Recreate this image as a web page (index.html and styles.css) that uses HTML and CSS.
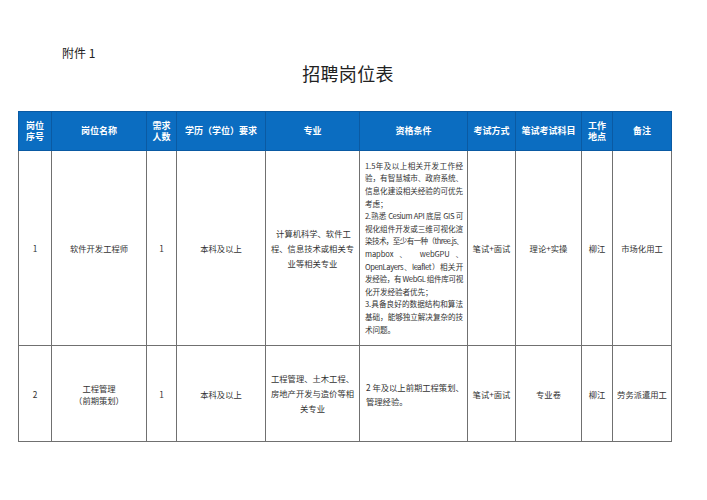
FILE: index.html
```html
<!DOCTYPE html>
<html lang="zh">
<head>
<meta charset="utf-8">
<link rel="stylesheet" href="styles.css">
</head>
<body>
<div class="page">
  <div class="annex">附件 1</div>
  <h1 class="title">招聘岗位表</h1>
  <table class="jobs">
    <colgroup>
      <col class="c1"><col class="c2"><col class="c3"><col class="c4"><col class="c5">
      <col class="c6"><col class="c7"><col class="c8"><col class="c9"><col class="c10">
    </colgroup>
    <thead>
      <tr>
        <th>岗位<br>序号</th>
        <th>岗位名称</th>
        <th>需求<br>人数</th>
        <th>学历（学位）要求</th>
        <th>专业</th>
        <th>资格条件</th>
        <th>考试方式</th>
        <th>笔试考试科目</th>
        <th>工作<br>地点</th>
        <th>备注</th>
      </tr>
    </thead>
    <tbody>
      <tr class="r1">
        <td>1</td>
        <td>软件开发工程师</td>
        <td>1</td>
        <td>本科及以上</td>
        <td class="major">&nbsp;计算机科学、软件工<br>程、信息技术或相关专<br>业等相关专业</td>
        <td class="qual">
          <span class="ln j">1.5年及以上相关开发工作经</span>
          <span class="ln j">验，有智慧城市、政府系统、</span>
          <span class="ln j">信息化建设相关经验的可优先</span>
          <span class="ln">考虑；</span>
          <span class="ln j t">2.熟悉 Cesium API 底层 GIS 可</span>
          <span class="ln j">视化组件开发或三维可视化渲</span>
          <span class="ln j tt">染技术，至少有一种（three.js、</span>
          <span class="ln j">mapbox、 webGPU、</span>
          <span class="ln j t">OpenLayers、leaflet）相关开</span>
          <span class="ln j t">发经验，有 WebGL 组件库可视</span>
          <span class="ln">化开发经验者优先；</span>
          <span class="ln j">3.具备良好的数据结构和算法</span>
          <span class="ln j">基础，能够独立解决复杂的技</span>
          <span class="ln">术问题。</span>
        </td>
        <td>笔试+面试</td>
        <td>理论+实操</td>
        <td>柳江</td>
        <td>市场化用工</td>
      </tr>
      <tr class="r2">
        <td>2</td>
        <td class="name2">工程管理<br>（前期策划）</td>
        <td>1</td>
        <td>本科及以上</td>
        <td class="major">工程管理、土木工程、<br>房地产开发与造价等相<br>关专业</td>
        <td class="qual2">2 年及以上前期工程策划、<br>管理经验。</td>
        <td>笔试+面试</td>
        <td>专业卷</td>
        <td>柳江</td>
        <td>劳务派遣用工</td>
      </tr>
    </tbody>
  </table>
</div>
</body>
</html>
```

FILE: styles.css
```css
html, body {
  margin: 0;
  padding: 0;
  background: #ffffff;
}
body {
  font-family: "Noto Sans CJK SC", "Noto Sans", "Liberation Sans", sans-serif;
  color: #333333;
}
.page {
  width: 653px;
  margin-left: 18px;
  padding-top: 46px;
}
.annex {
  font-size: 12px;
  line-height: 14px;
  height: 14px;
  padding-left: 44px;
  color: #222222;
}
.title {
  margin: 1px 0 0 0;
  padding-left: 7px;
  font-size: 18px;
  line-height: 24px;
  font-weight: normal;
  text-align: center;
  color: #222222;
  letter-spacing: 0.3px;
}
.jobs {
  margin-top: 26px;
  width: 653px;
  table-layout: fixed;
  border-collapse: collapse;
}
.c1 { width: 33px; }
.c2 { width: 95px; }
.c3 { width: 30px; }
.c4 { width: 89px; }
.c5 { width: 94px; }
.c6 { width: 108px; }
.c7 { width: 48px; }
.c8 { width: 66px; }
.c9 { width: 31px; }
.c10 { width: 59px; }

.jobs th {
  background: #0b6dc1;
  color: #ffffff;
  font-weight: bold;
  font-size: 9px;
  line-height: 11.5px;
  height: 38px;
  padding: 0;
  text-align: center;
  vertical-align: middle;
  border: 1px solid #0a5aa3;
  white-space: nowrap;
}
.jobs td {
  border: 1px solid #707070;
  font-size: 8.3px;
  line-height: 12px;
  text-align: center;
  vertical-align: middle;
  padding: 0;
  color: #333333;
  white-space: nowrap;
}
.r1 td { height: 194px; }
.r2 td { height: 95px; }
.jobs td.major {
  line-height: 15px;
}
.jobs td.qual {
  text-align: left;
  padding: 0 4px 0 5px;
  font-size: 7.6px;
  line-height: 12.6px;
  letter-spacing: -0.1px;
}
.ln {
  display: block;
  white-space: nowrap;
}
.ln.j {
  text-align: justify;
  text-align-last: justify;
  white-space: normal;
}
.ln.t {
  letter-spacing: -0.4px;
}
.ln.tt {
  letter-spacing: -0.65px;
}
.jobs td.qual2 {
  text-align: left;
  padding-left: 6px;
  line-height: 14px;
}
```
